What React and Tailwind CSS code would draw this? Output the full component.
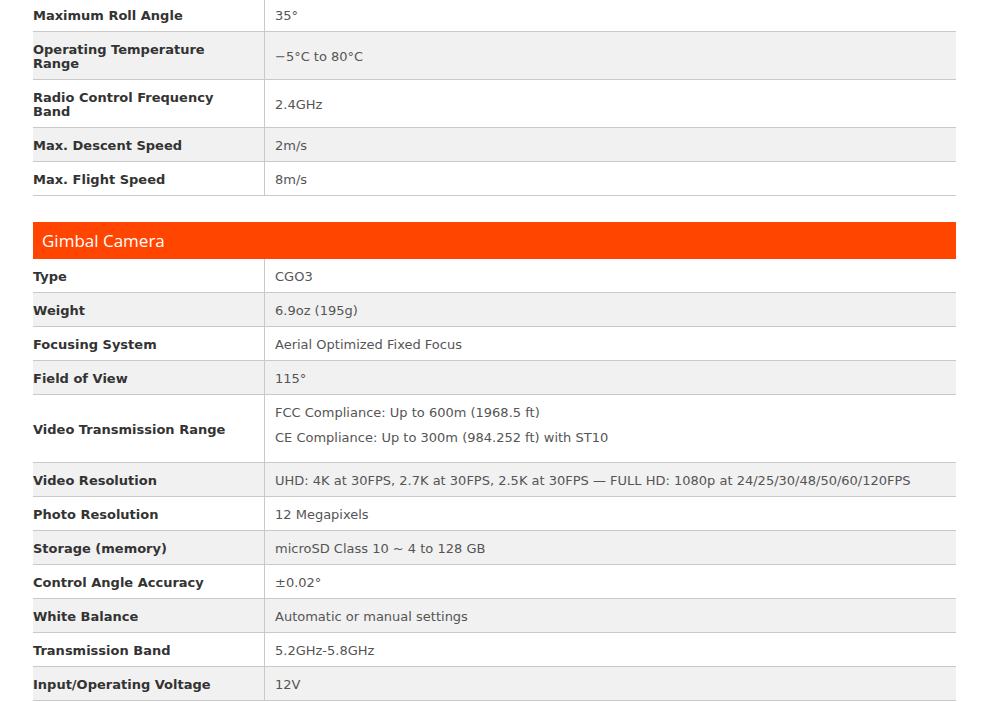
const flight = [
  ['Maximum Roll Angle', ['35°']],
  ['Operating Temperature Range', ['−5°C to 80°C']],
  ['Radio Control Frequency Band', ['2.4GHz']],
  ['Max. Descent Speed', ['2m/s']],
  ['Max. Flight Speed', ['8m/s']],
]

const camera = [
  ['Type', ['CGO3']],
  ['Weight', ['6.9oz (195g)']],
  ['Focusing System', ['Aerial Optimized Fixed Focus']],
  ['Field of View', ['115°']],
  ['Video Transmission Range', ['FCC Compliance: Up to 600m (1968.5 ft)', 'CE Compliance: Up to 300m (984.252 ft) with ST10']],
  ['Video Resolution', ['UHD: 4K at 30FPS, 2.7K at 30FPS, 2.5K at 30FPS — FULL HD: 1080p at 24/25/30/48/50/60/120FPS']],
  ['Photo Resolution', ['12 Megapixels']],
  ['Storage (memory)', ['microSD Class 10 ~ 4 to 128 GB']],
  ['Control Angle Accuracy', ['±0.02°']],
  ['White Balance', ['Automatic or manual settings']],
  ['Transmission Band', ['5.2GHz-5.8GHz']],
  ['Input/Operating Voltage', ['12V']],
]

function Row({ label, values, shaded }) {
  const multi = values.length > 1
  return (
    <div className={`flex border-b border-[#c9c9c9] ${shaded ? 'bg-[#f1f1f1]' : 'bg-white'}`}>
      <div className="w-[231px] shrink-0 flex items-center pt-[11px] pb-[8px] pr-4 font-bold text-[13px] leading-[14px] text-[#333]">
        {label}
      </div>
      <div className={`flex-1 border-l border-[#c9c9c9] pl-[10px] pt-[11px] ${multi ? 'pb-[6px]' : 'pb-[8px]'} flex flex-col justify-center text-[13px] leading-[14px] text-[#555]`}>
        {values.map((v, i) => (
          <p key={i} className={multi ? 'mb-[11px]' : ''}>{v}</p>
        ))}
      </div>
    </div>
  )
}

export default function App() {
  return (
    <div className="w-[1000px] h-[702px] overflow-hidden bg-white font-['DejaVu_Sans',sans-serif]">
      <div className="ml-[33px] w-[923px] -mt-[2px]">
        {flight.map(([l, v], i) => (
          <Row key={l} label={l} values={v} shaded={i % 2 === 1} />
        ))}

        <div className="mt-[26px] h-[37px] bg-[#ff4500] flex items-center pl-[9px] text-white text-[17px] font-['Open_Sans',sans-serif]">
          Gimbal Camera
        </div>

        {camera.map(([l, v], i) => (
          <Row key={l} label={l} values={v} shaded={i % 2 === 1} />
        ))}
      </div>
    </div>
  )
}
